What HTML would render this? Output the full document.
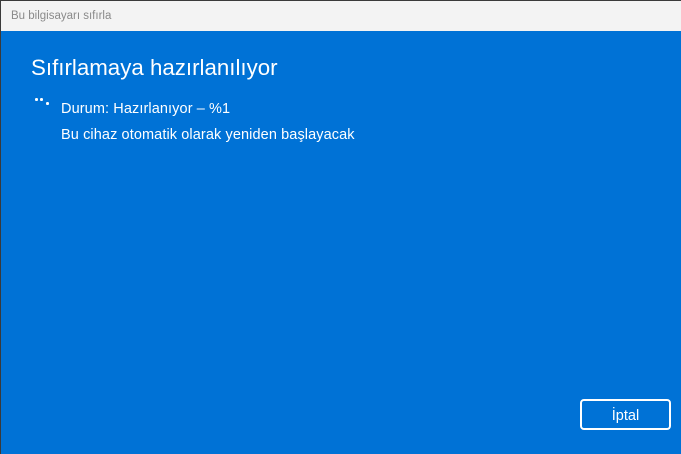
<!DOCTYPE html>
<html><head><meta charset="utf-8"><style>
body{margin:0;width:681px;height:454px;overflow:hidden;background:#3a3a3a;font-family:"Liberation Sans",sans-serif;}
.win{position:absolute;left:1px;top:1px;width:680px;height:453px;background:#0072d6;}
.tb{height:30px;background:#f3f3f3;color:#8a8a8a;font-size:11.5px;line-height:30px;padding-left:10px;}
h1{position:absolute;left:30px;top:54px;margin:0;font-weight:normal;font-size:22.3px;color:#fff;}
.t{position:absolute;left:60px;color:#fff;font-size:14.5px;letter-spacing:0.1px;}
.btn{position:absolute;left:579px;top:398px;width:87px;height:27px;border:2px solid #fff;border-radius:4px;color:#fff;font-size:14.5px;text-align:center;line-height:31px;}
.d{position:absolute;width:2.5px;height:2.5px;border-radius:50%;background:#fff;}
</style></head><body><div class="win">
<div class="tb">Bu bilgisayarı sıfırla</div>
<h1>Sıfırlamaya hazırlanılıyor</h1>
<div class="d" style="left:34px;top:97px"></div><div class="d" style="left:39px;top:97px"></div><div class="d" style="left:45px;top:101px"></div>
<div class="t" style="top:100px">Durum: Hazırlanıyor – %1</div>
<div class="t" style="top:126px">Bu cihaz otomatik olarak yeniden başlayacak</div>
<div class="btn">İptal</div>
</div></body></html>
